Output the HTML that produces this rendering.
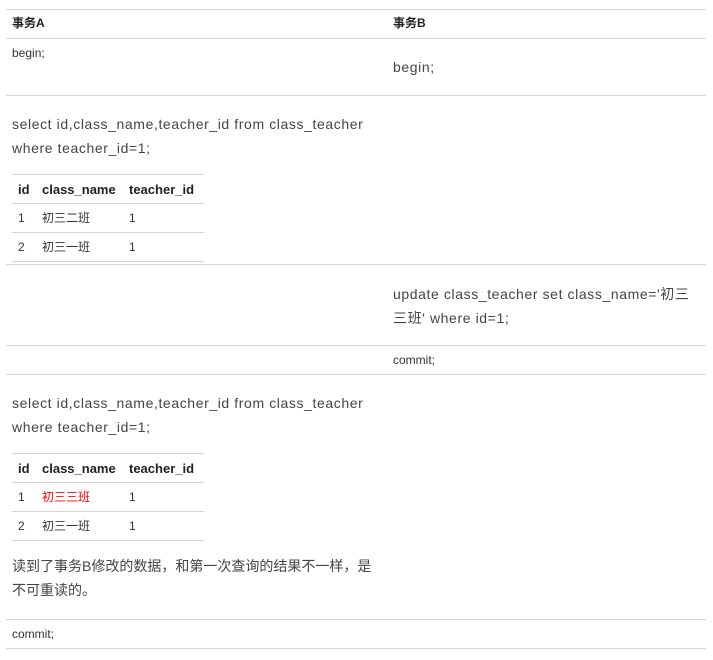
<!DOCTYPE html>
<html><head><meta charset="utf-8"><style>
body{margin:0;width:713px;height:660px;background:#fff;position:relative;font-family:"Liberation Sans","Noto Sans CJK SC",sans-serif;color:#333;overflow:hidden}
.h{position:absolute;left:6px;width:700px;height:1px;background:#d4d4d4}
.s{position:absolute;left:12px;width:192px;height:1px;background:#d4d4d4}
.t{position:absolute;white-space:nowrap;line-height:1}
.b{font-weight:bold;font-size:12px;color:#222}
.f12{font-size:12px}
.f14{font-size:14px;color:#444}
.ls{letter-spacing:0.6px}
</style></head><body>
<div class="h" style="top:9px"></div>
<div class="h" style="top:38px"></div>
<div class="h" style="top:95px"></div>
<div class="h" style="top:264px"></div>
<div class="h" style="top:345px"></div>
<div class="h" style="top:374px"></div>
<div class="h" style="top:619px"></div>
<div class="h" style="top:648px"></div>

<div class="t b" style="left:12px;top:17px">事务A</div>
<div class="t b" style="left:393px;top:17px">事务B</div>
<div class="t f12" style="left:12px;top:47px">begin;</div>
<div class="t f14 ls" style="left:393px;top:60px">begin;</div>

<div class="t f14 ls" style="left:12px;top:117px">select id,class_name,teacher_id from class_teacher</div>
<div class="t f14 ls" style="left:12px;top:141px">where teacher_id=1;</div>
<div class="s" style="top:174px"></div>
<div class="s" style="top:203px"></div>
<div class="s" style="top:232px"></div>
<div class="s" style="top:261px"></div>
<div class="t b" style="left:18px;top:183px;font-size:13px">id</div>
<div class="t b" style="left:42px;top:183px;font-size:13px">class_name</div>
<div class="t b" style="left:129px;top:183px;font-size:13px">teacher_id</div>
<div class="t f12" style="left:18px;top:212px">1</div>
<div class="t f12" style="left:42px;top:212px">初三二班</div>
<div class="t f12" style="left:129px;top:212px">1</div>
<div class="t f12" style="left:18px;top:241px">2</div>
<div class="t f12" style="left:42px;top:241px">初三一班</div>
<div class="t f12" style="left:129px;top:241px">1</div>

<div class="t f14 ls" style="left:393px;top:287px">update class_teacher set class_name='初三</div>
<div class="t f14 ls" style="left:393px;top:311px">三班' where id=1;</div>
<div class="t f12" style="left:393px;top:354px">commit;</div>

<div class="t f14 ls" style="left:12px;top:396px">select id,class_name,teacher_id from class_teacher</div>
<div class="t f14 ls" style="left:12px;top:420px">where teacher_id=1;</div>
<div class="s" style="top:453px"></div>
<div class="s" style="top:482px"></div>
<div class="s" style="top:511px"></div>
<div class="s" style="top:540px"></div>
<div class="t b" style="left:18px;top:462px;font-size:13px">id</div>
<div class="t b" style="left:42px;top:462px;font-size:13px">class_name</div>
<div class="t b" style="left:129px;top:462px;font-size:13px">teacher_id</div>
<div class="t f12" style="left:18px;top:491px">1</div>
<div class="t f12" style="left:42px;top:491px;color:#f00">初三三班</div>
<div class="t f12" style="left:129px;top:491px">1</div>
<div class="t f12" style="left:18px;top:520px">2</div>
<div class="t f12" style="left:42px;top:520px">初三一班</div>
<div class="t f12" style="left:129px;top:520px">1</div>
<div class="t f14" style="left:12px;top:559px">读到了事务B修改的数据，和第一次查询的结果不一样，是</div>
<div class="t f14" style="left:12px;top:583px">不可重读的。</div>
<div class="t f12" style="left:12px;top:628px">commit;</div>
</body></html>
